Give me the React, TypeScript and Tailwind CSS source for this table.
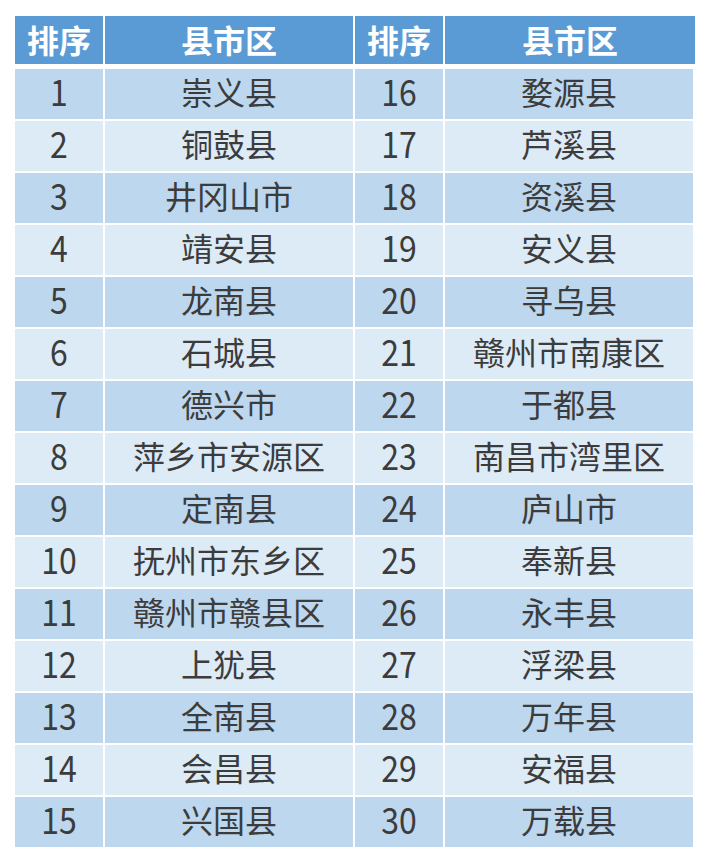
import React from "react";

const left = ["崇义县","铜鼓县","井冈山市","靖安县","龙南县","石城县","德兴市","萍乡市安源区","定南县","抚州市东乡区","赣州市赣县区","上犹县","全南县","会昌县","兴国县"];
const right = ["婺源县","芦溪县","资溪县","安义县","寻乌县","赣州市南康区","于都县","南昌市湾里区","庐山市","奉新县","永丰县","浮梁县","万年县","安福县","万载县"];

const font = { fontFamily: '"Microsoft YaHei", "Noto Sans CJK SC", sans-serif' };

export default function App() {
  return (
    <div className="w-[710px] h-[863px] bg-white pt-[16px] pl-[15px]" style={font}>
      <div className="flex gap-[2px] w-[680px] h-[48px] text-white font-bold text-[32px] leading-none">
        <div className="w-[88px] bg-[#5b9bd5] flex items-center justify-center pb-[3px]">排序</div>
        <div className="w-[248px] bg-[#5b9bd5] flex items-center justify-center pb-[3px]">县市区</div>
        <div className="w-[88px] bg-[#5b9bd5] flex items-center justify-center pb-[3px]">排序</div>
        <div className="w-[250px] bg-[#5b9bd5] flex items-center justify-center pb-[3px]">县市区</div>
      </div>
      <div className="mt-[5px] flex flex-col gap-[2px] text-[32px] leading-none text-[#3c3c3c]">
        {left.map((l, i) => {
          const bg = i % 2 === 0 ? "bg-[#bdd7ee]" : "bg-[#ddebf7]";
          return (
            <div key={i} className="flex gap-[2px] h-[50px]">
              <div className={`w-[88px] ${bg} flex items-center justify-center pb-[8px]`}>
                <span className="inline-block scale-y-[1.12]">{i + 1}</span>
              </div>
              <div className={`w-[248px] ${bg} flex items-center justify-center pb-[7px]`}>{l}</div>
              <div className={`w-[88px] ${bg} flex items-center justify-center pb-[8px]`}>
                <span className="inline-block scale-y-[1.12]">{i + 16}</span>
              </div>
              <div className={`w-[248px] ${bg} flex items-center justify-center pb-[7px]`}>{right[i]}</div>
            </div>
          );
        })}
      </div>
    </div>
  );
}
